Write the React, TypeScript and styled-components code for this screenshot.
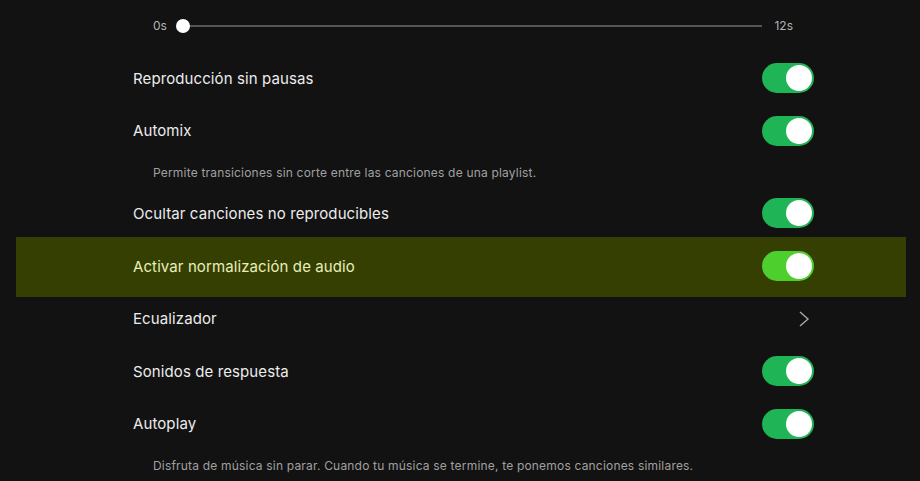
import styled, { createGlobalStyle } from 'styled-components'

const GlobalStyle = createGlobalStyle`
  html, body {
    margin: 0;
    padding: 0;
    background: #121212;
  }
  body {
    font-family: Inter, "Noto Sans", sans-serif;
    -webkit-font-smoothing: antialiased;
  }
`

type Item =
  | { kind: 'toggle'; label: string; on: boolean; active?: boolean }
  | { kind: 'link'; label: string }
  | { kind: 'note'; text: string }

const items: Item[] = [
  { kind: 'toggle', label: 'Reproducción sin pausas', on: true },
  { kind: 'toggle', label: 'Automix', on: true },
  { kind: 'note', text: 'Permite transiciones sin corte entre las canciones de una playlist.' },
  { kind: 'toggle', label: 'Ocultar canciones no reproducibles', on: true },
  { kind: 'toggle', label: 'Activar normalización de audio', on: true, active: true },
  { kind: 'link', label: 'Ecualizador' },
  { kind: 'toggle', label: 'Sonidos de respuesta', on: true },
  { kind: 'toggle', label: 'Autoplay', on: true },
  {
    kind: 'note',
    text: 'Disfruta de música sin parar. Cuando tu música se termine, te ponemos canciones similares.',
  },
]

const App = () => {
  return (
    <>
      <GlobalStyle />
      <Page>
        {/* crossfade slider */}
        <SliderRow>
          <SliderLabel>0s</SliderLabel>
          <Track>
            <Thumb />
          </Track>
          <SliderLabel>12s</SliderLabel>
        </SliderRow>

        <List>
          {items.map((item, i) => {
            if (item.kind === 'note') return <Note key={i}>{item.text}</Note>
            return (
              <Row key={i} $active={item.kind === 'toggle' && !!item.active}>
                <Label $active={item.kind === 'toggle' && !!item.active}>{item.label}</Label>
                {item.kind === 'toggle' ? (
                  <Switch $on={item.on} $active={!!item.active}>
                    <Knob />
                  </Switch>
                ) : (
                  <Chevron width="16" height="18" viewBox="0 0 16 18">
                    <path d="M4 2 L12 9 L4 16" fill="none" stroke="#a7a7a7" strokeWidth="1.4" />
                  </Chevron>
                )}
              </Row>
            )
          })}
        </List>
      </Page>
    </>
  )
}

const Page = styled.main`
  width: 920px;
  height: 481px;
  overflow: hidden;
  background: #121212;
`

const SliderRow = styled.div`
  height: 52px;
  display: flex;
  align-items: center;
  gap: 8px;
  padding: 0 127px 0 153px;
  box-sizing: border-box;
`

const SliderLabel = styled.span`
  font-size: 12px;
  color: #b3b3b3;
  line-height: 1;
`

const Track = styled.div`
  flex: 1;
  height: 2px;
  margin: 0 4px 0 8px;
  background: #555;
  position: relative;
`

const Thumb = styled.div`
  position: absolute;
  left: -7px;
  top: -6px;
  width: 14px;
  height: 14px;
  border-radius: 50%;
  background: #fff;
`

const List = styled.div`
  display: flex;
  flex-direction: column;
  padding: 0 18px 0 20px;
`

const Row = styled.div<{ $active: boolean }>`
  height: 52.6px;
  display: flex;
  align-items: center;
  justify-content: space-between;
  padding: 0 88px 0 113px;
  position: relative;
  isolation: isolate;

  &::before {
    content: '';
    display: ${(p) => (p.$active ? 'block' : 'none')};
    position: absolute;
    inset: -3px -4px -5px -4px;
    background: #363f02;
    z-index: -1;
  }
`

const Label = styled.span<{ $active: boolean }>`
  font-size: 15px;
  color: ${(p) => (p.$active ? '#e6efb8' : '#ececec')};
  letter-spacing: 0.1px;
`

const Switch = styled.div<{ $on: boolean; $active: boolean }>`
  width: 52px;
  height: 30px;
  border-radius: 15px;
  box-sizing: border-box;
  padding: 2px;
  display: flex;
  justify-content: ${(p) => (p.$on ? 'flex-end' : 'flex-start')};
  align-items: center;
  background: ${(p) => (p.$active ? '#4dcf2e' : p.$on ? '#1fb456' : '#535353')};
`

const Knob = styled.div`
  width: 26px;
  height: 26px;
  border-radius: 50%;
  background: #fff;
`

const Chevron = styled.svg`
  display: block;
  margin-right: 2px;
`

const Note = styled.div`
  height: 30px;
  display: flex;
  align-items: center;
  padding-left: 133px;
  font-size: 12px;
  color: #a0a0a0;
  letter-spacing: 0.19px;
`

export default App
